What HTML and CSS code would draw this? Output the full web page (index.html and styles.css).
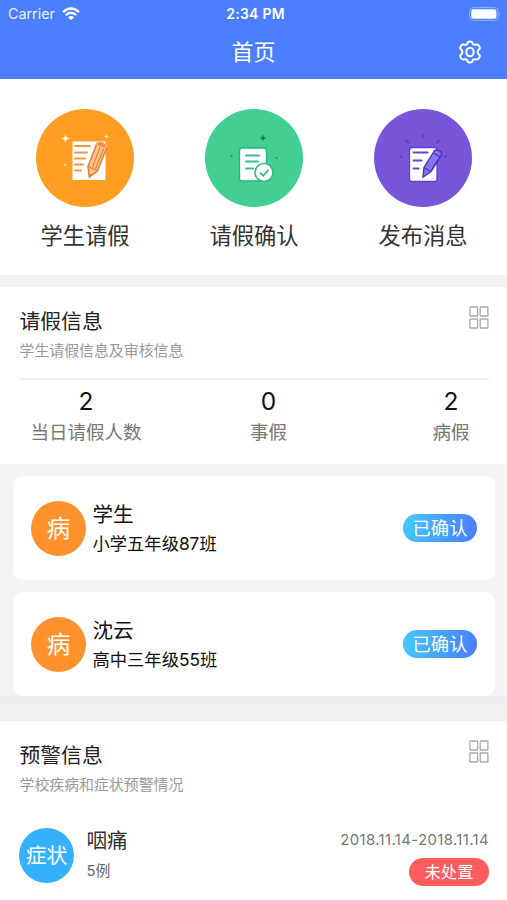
FILE: index.html
```html
<!DOCTYPE html>
<html lang="zh-CN">
<head>
<meta charset="utf-8">
<title>首页</title>
<link rel="stylesheet" href="styles.css">
</head>
<body>
<header class="header">
  <div class="status">
    <div class="carrier">Carrier
      <svg width="18" height="14" viewBox="0 0 18 14" fill="none" stroke="#fff" stroke-width="2.3"><path d="M1 5.1Q9-2.1 17 5.1M3.8 8.2Q9 3.4 14.2 8.2"/><path d="M6 10.3Q9 7.6 12 10.3L9 13.2z" fill="#fff" stroke="none"/></svg>
    </div>
    <div class="clock">2:34 PM</div>
    <svg class="battery" width="32" height="14" viewBox="0 0 32 14"><rect x=".6" y=".6" width="28.6" height="12.8" rx="3.8" fill="none" stroke="#91b2ff"/><rect x="2.2" y="2.2" width="25.2" height="9.6" rx="2.2" fill="#fff"/><path d="M30.3 4.7Q32 7 30.3 9.3z" fill="#91b2ff"/></svg>
  </div>
  <div class="navbar">
    <span></span>
    <h1 class="page-title">首页</h1>
    <svg class="gear" width="24" height="24" viewBox="0 0 24 24" fill="none" stroke="#fff" stroke-width="2" stroke-linejoin="round"><path d="M9.4 3.2Q9.7 1.5 12 1.5T14.6 3.2Q15.2 5.3 17.4 4.7Q19.5 3.9 20.7 5.5Q22.6 8.1 21.2 9.2Q19.7 10.2 19.7 12T21.2 14.8Q22.6 15.9 20.7 18.5Q19.5 20.1 17.4 19.3Q15.2 18.7 14.6 20.8Q14.3 22.5 12 22.5T9.4 20.8Q8.8 18.7 6.6 19.3Q4.5 20.1 3.3 18.5Q1.4 15.9 2.8 14.8Q4.300 13.800 4.300 12T2.800 9.200Q1.400 8.100 3.300 5.500Q4.500 3.900 6.600 4.700Q8.800 5.300 9.400 3.200z"/><ellipse cx="12" cy="12" rx="3.700" ry="4.200"/></svg>
  </div>
</header>

<nav class="actions">
  <a class="action">
    <svg width="98" height="98" viewBox="0 0 98 98"><circle cx="49" cy="49" r="49" fill="#ff9e22"/><path d="M36.500 32.500H69.500V71H36.500z" fill="#fff"/><path d="M39 37h15M39 43.500h12M39 49.500h10M39 55.500h8M39 61.500h6" stroke="#e79a48" stroke-width="2" stroke-linecap="round"/><path d="M60.800 34.500L52 57.500L53.300 68L61.500 62L70.800 38.500Q67 32 60.800 34.500z" fill="#ffc58d" stroke="#e4863d" stroke-width="1.600"/><path d="M52 57.500L61.500 62M64.500 37L56.500 58.500M67.800 39L59.500 60" stroke="#e4863d" stroke-width="1.300"/><ellipse cx="65.700" cy="35.800" rx="5.200" ry="2.600" transform="rotate(17 65.700 35.800)" fill="#ed924c" stroke="#ffcb9b" stroke-width=".8"/><path d="M53.300 68l-.4-3 3 1z" fill="#d97b35"/><path d="M29.500 25l1.100 3.400 3.400 1.100-3.400 1.100-1.100 3.400-1.100-3.400-3.400-1.100 3.400-1.100z" fill="#fff"/><path d="M70.500 25l.6 1.800 1.900.7-1.900.7-.6 1.800-.6-1.800-1.900-.7 1.900-.7zM29 54l.5 1.500 1.500.5-1.500.5-.5 1.500-.5-1.500-1.500-.5 1.500-.5z" fill="#ffe1ad"/></svg>
    <span>学生请假</span>
  </a>
  <a class="action">
    <svg width="98" height="98" viewBox="0 0 98 98"><circle cx="49" cy="49" r="49" fill="#42cf91"/><rect x="34.500" y="39" width="27" height="33" rx="2.500" fill="#fff" stroke="#28b77b" stroke-width="1.300"/><path d="M41 46.500h13M41 52.500h12M41 59.500h7" stroke="#42bc8c" stroke-width="2" stroke-linecap="round"/><circle cx="59" cy="63.500" r="9" fill="#fff" stroke="#35bc85" stroke-width="1.700"/><path d="M55 63.500l3.200 3.200 5.300-6" fill="none" stroke="#35bc85" stroke-width="1.700"/><path d="M58 25.500l1 2.500 2.500 1-2.500 1-1 2.500-1-2.500-2.500-1 2.500-1z" fill="#087f51"/><circle cx="26.500" cy="47" r="1.100" fill="#189665"/><circle cx="71.500" cy="49" r="1.100" fill="#189665"/></svg>
    <span>请假确认</span>
  </a>
  <a class="action">
    <svg width="98" height="98" viewBox="0 0 98 98"><circle cx="49" cy="49" r="49" fill="#7955d9"/><rect x="35.500" y="38.500" width="27.500" height="34" rx="2.500" fill="#fff" stroke="#5d3fd0" stroke-width="1.300"/><path d="M39.500 43.500h14M39.500 51.500h8M39.500 59.500h5" stroke="#6246c8" stroke-width="2" stroke-linecap="round"/><path d="M60.500 41.500L50 58.500L49 68L57 62.500L67.500 46Q68 40 60.500 41.500z" fill="#8875f5" stroke="#4c31bd" stroke-width="1.400"/><path d="M50 58.500l7 4M59.500 44l6.500 4M57.500 61.500L64 50.500" stroke="#4c31bd" stroke-width="1.200"/><path d="M49 25.500v4M32 31l2.500 3.500M65.500 31L63 34.500M25.500 47l3 1M73 47l-3 1" stroke="#5a38c1" stroke-width="1.500"/></svg>
    <span>发布消息</span>
  </a>
</nav>

<section class="leave">
  <div class="section-head">
    <div>
      <h2 class="section-title">请假信息</h2>
      <p class="section-note">学生请假信息及审核信息</p>
    </div>
    <svg class="more" width="20" height="24" viewBox="0 0 20 24" fill="none" stroke="#aaa" stroke-width="1.300"><rect x=".9" y="1" width="7.700" height="9" rx=".6"/><rect x="11.200" y="1" width="7.700" height="9" rx=".6"/><rect x=".9" y="13" width="7.700" height="9" rx=".6"/><rect x="11.200" y="13" width="7.700" height="9" rx=".6"/></svg>
  </div>
  <div class="stats">
    <div class="stat"><b>2</b><span>当日请假人数</span></div>
    <div class="stat"><b>0</b><span>事假</span></div>
    <div class="stat"><b>2</b><span>病假</span></div>
  </div>
</section>

<main class="cards">
  <article class="card">
    <div class="avatar">病</div>
    <div class="student"><h3>学生</h3><p>小学五年级87班</p></div>
    <span class="confirmed">已确认</span>
  </article>
  <article class="card">
    <div class="avatar">病</div>
    <div class="student"><h3>沈云</h3><p>高中三年级55班</p></div>
    <span class="confirmed">已确认</span>
  </article>
</main>

<section class="warning">
  <div class="section-head">
    <div>
      <h2 class="section-title">预警信息</h2>
      <p class="section-note">学校疾病和症状预警情况</p>
    </div>
    <svg class="more" width="20" height="24" viewBox="0 0 20 24" fill="none" stroke="#aaa" stroke-width="1.300"><rect x=".9" y="1" width="7.700" height="9" rx=".6"/><rect x="11.200" y="1" width="7.700" height="9" rx=".6"/><rect x=".9" y="13" width="7.700" height="9" rx=".6"/><rect x="11.200" y="13" width="7.700" height="9" rx=".6"/></svg>
  </div>
  <div class="alert">
    <div class="avatar symptom">症状</div>
    <div class="illness"><h3>咽痛</h3><p>5例</p></div>
    <div class="alert-side"><time>2018.11.14-2018.11.14</time><span class="pending">未处置</span></div>
  </div>
</section>
</body>
</html>
```
FILE: styles.css
```css
* { box-sizing: border-box; }
body, h1, h2, h3, p { margin: 0; font-weight: 400; }
body {
  height: 900px;
  overflow: hidden;
  background: #f2f2f2;
  color: #222;
  font-family: Inter, "Noto Sans CJK SC", sans-serif;
}
svg { display: block; flex: none; }
span, h1, h2, h3, p, time { white-space: nowrap; }

.header { height: 79px; background: #4b7fff; color: #fff; }
.status {
  display: grid;
  grid-template-columns: 1fr auto 1fr;
  align-items: center;
  height: 27px;
  padding: 0 6px 0 8px;
}
.carrier { display: flex; align-items: center; gap: 7px; font-size: 14.3px; color: #e8efff; }
.clock { padding-left: 2px; font-size: 13.900px; font-weight: 600; letter-spacing: .3px; }
.battery { justify-self: end; }
.navbar {
  display: grid;
  grid-template-columns: 1fr auto 1fr;
  align-items: center;
  height: 50px;
  padding: 0 25px;
}
.page-title { font-size: 22px; line-height: 50px; }
.gear { justify-self: end; }

.actions {
  display: grid;
  grid-template-columns: repeat(3, 1fr);
  height: 196px;
  padding-top: 30px;
  margin-bottom: 12px;
  background: #fff;
}
.action {
  display: flex;
  flex-direction: column;
  align-items: center;
  gap: 12px;
  padding-left: 1px;
  color: #333;
  font-size: 22.3px;
  line-height: 34px;
}

.leave { height: 177px; background: #fff; }
.section-head {
  display: flex;
  justify-content: space-between;
  height: 93px;
  margin: 0 18px 0 19.500px;
  padding-top: 19px;
}
.leave .section-head { border-bottom: 2px solid #efefef; }
.section-title { font-size: 20.800px; line-height: 31px; color: #222; }
.section-note { margin-top: 3px; font-size: 14.900px; line-height: 22px; color: #999; }
.stats { display: flex; justify-content: space-between; padding: 3px 0 0 30px; }
.stat { display: flex; flex-direction: column; align-items: center; width: 112px; }
.stat b { font-size: 24.500px; line-height: 36px; font-weight: 400; color: #111; }
.stat span { font-size: 18.500px; line-height: 26px; color: #777; }

.cards {
  display: flex;
  flex-direction: column;
  gap: 12px;
  height: 257px;
  padding: 12px 12px 0 13px;
  background: linear-gradient(#f4f4f4 0 231px, #efeff3 233px, #f0f0f0);
}
.card {
  display: flex;
  align-items: center;
  height: 104px;
  padding: 0 18px;
  border-radius: 9px;
  background: #fff;
}
.avatar {
  flex: none;
  width: 55px;
  height: 55px;
  border-radius: 50%;
  background: #ff922c;
  color: #fff;
  font-size: 23.500px;
  line-height: 56px;
  text-align: center;
}
.student { margin-left: 6.500px; padding-top: 1px; color: #111; }
.student h3 { font-size: 20.600px; line-height: 31px; }
.student p { font-size: 17.300px; line-height: 28px; }
.confirmed {
  width: 74px;
  height: 28px;
  margin-left: auto;
  border-radius: 14px;
  background: linear-gradient(100deg, #45cafa, #4b7cff);
  color: #fff;
  font-size: 18.300px;
  line-height: 28px;
  text-align: center;
}

.warning { height: 179px; background: #fff; }
.alert { display: flex; padding: 14px 18px 0 19px; }
.symptom { background: #36b1ff; font-size: 20.800px; line-height: 56px; }
.illness { margin: -3px 0 0 12.500px; color: #333; }
.illness h3 { font-size: 20.600px; line-height: 31px; }
.illness p { margin-top: 4px; font-size: 14.800px; line-height: 22px; color: #666; }
.alert-side {
  display: flex;
  flex-direction: column;
  align-items: flex-end;
  gap: 8px;
  margin: 2px 0 0 auto;
}
.alert-side time {
  font-size: 14.900px;
  line-height: 20px;
  letter-spacing: .38px;
  color: #777;
}
.pending {
  width: 80px;
  height: 28px;
  border-radius: 14px;
  background: #ff5c5e;
  color: #fff;
  font-size: 16.300px;
  line-height: 28px;
  text-align: center;
}
```
